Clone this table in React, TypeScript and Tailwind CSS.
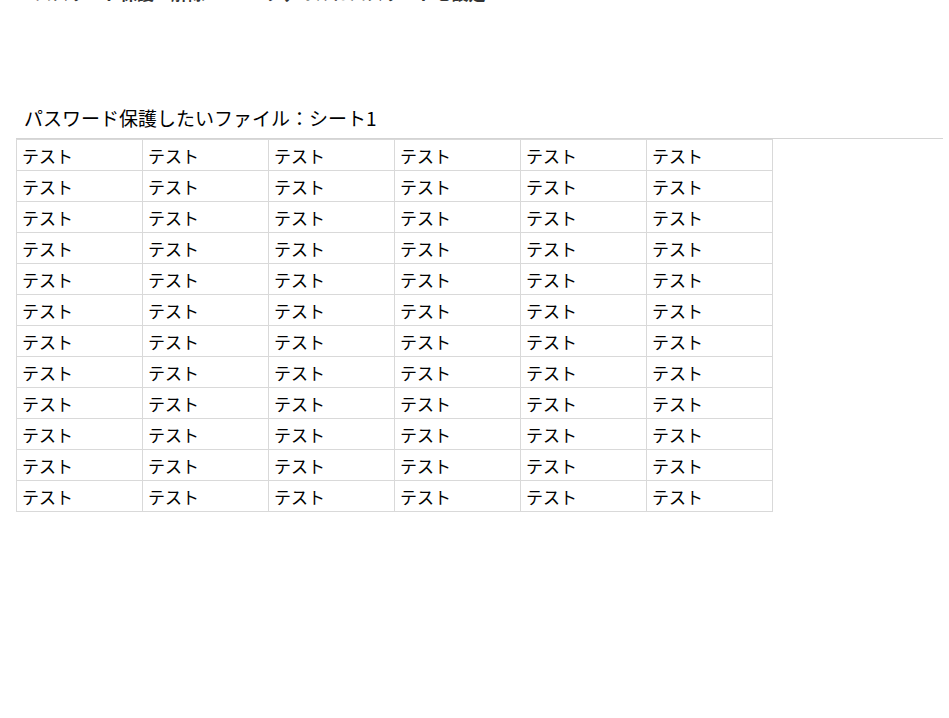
const rows = Array.from({ length: 12 });
const cols = Array.from({ length: 6 });

export default function App() {
  return (
    <div
      className="w-[949px] h-[718px] bg-white overflow-hidden text-black"
      style={{ fontFamily: '"Noto Sans CJK JP", "Liberation Sans", sans-serif' }}
    >
      {/* heading scrolled mostly out of view */}
      <div className="-mt-[18px] pl-[18px] text-[17px] leading-[21px] font-bold text-[#333] whitespace-nowrap">
        ■パスワード保護　解除　Excelファイルにパスワードを設定
      </div>

      <div className="mt-[103px] pl-[16px]">
        <div className="pl-[8px] pb-[8px] text-[19px] leading-[24px] whitespace-nowrap border-b border-[#d4d4d4] w-[927px]">
          パスワード保護したいファイル：シート1
        </div>
        <table className="border-collapse text-[17px]">
          <tbody>
            {rows.map((_, r) => (
              <tr key={r}>
                {cols.map((_, c) => (
                  <td
                    key={c}
                    className="border border-[#d9d9d9] w-[126px] h-[31px] px-[5px] pt-[2px] pb-0 align-middle leading-[20px]"
                  >
                    テスト
                  </td>
                ))}
              </tr>
            ))}
          </tbody>
        </table>
      </div>
    </div>
  );
}
